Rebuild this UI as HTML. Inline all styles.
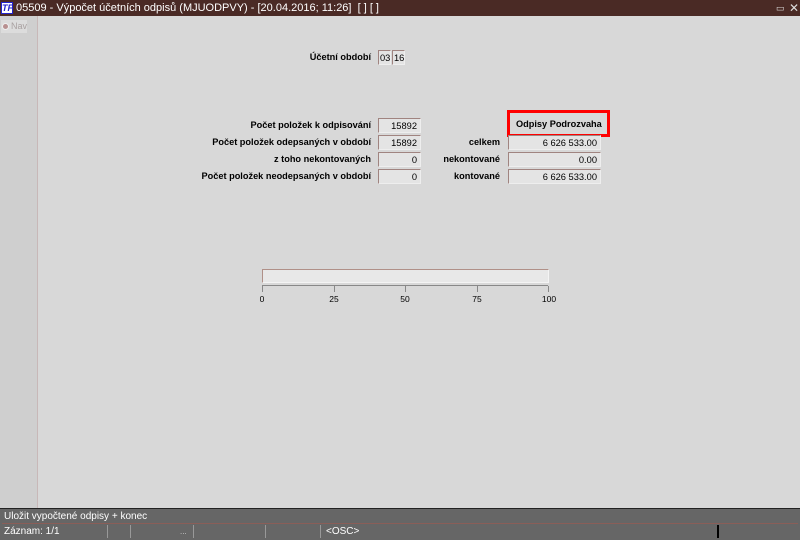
<!DOCTYPE html>
<html><head><meta charset="utf-8"><style>
*{margin:0;padding:0;box-sizing:border-box}
body{width:800px;height:540px;background:#d8d8d8;font-family:"Liberation Sans",sans-serif;font-size:11px;position:relative;overflow:hidden}
.a{position:absolute}
.lbl{position:absolute;font-weight:bold;font-size:9.2px;color:#000;text-align:right;white-space:nowrap}
.box{position:absolute;background:#e4e4e4;border:1px solid #a08480;border-right-color:#eee;border-bottom-color:#eee;font-size:9.3px;text-align:right;padding-right:3px;line-height:14px}
.tick{position:absolute;top:286px;width:1px;height:6px;background:#888}
.tl{position:absolute;top:294px;font-size:8.5px;width:30px;text-align:center}
</style></head><body>
<div class="a" style="left:0;top:0;width:800px;height:16px;background:#4a2a25;color:#fff;font-size:11px;line-height:16px;padding-left:16px">05509 - Výpočet účetních odpisů (MJUODPVY) - [20.04.2016; 11:26]&nbsp; [ ] [ ]</div>
<div class="a" style="left:1px;top:2px;width:12px;height:12px;background:#fff;border:1px solid #22c;color:#22c;font-size:9px;font-weight:bold;font-style:italic;line-height:10px;text-align:center">TF</div>
<div class="a" style="left:776px;top:3px;color:#ddd;font-size:9px">▭</div>
<div class="a" style="left:789px;top:0;color:#ddd;font-size:12px;line-height:16px">✕</div>
<div class="a" style="left:0;top:16px;width:38px;height:492px;background:#cfcfcf;border-right:1px solid #c8b8b8"></div>
<div class="a" style="left:1px;top:20px;width:26px;height:13px;background:#dcdcdc;color:#a8a0a0;font-size:9px;line-height:13px;padding-left:10px">Nav</div>
<div class="a" style="left:2px;top:23px;width:7px;height:7px;border-radius:50%;background:#b89090;border:1px solid #eee"></div>

<div class="lbl" style="right:429px;top:52px">Účetní období</div>
<div class="box" style="left:378px;top:50px;width:13px;height:15px;text-align:left;padding-left:1px">03</div>
<div class="box" style="left:392px;top:50px;width:13px;height:15px;text-align:left;padding-left:1px">16</div>

<div class="lbl" style="right:429px;top:120px">Počet položek k odpisování</div>
<div class="lbl" style="right:429px;top:137px">Počet položek odepsaných v období</div>
<div class="lbl" style="right:429px;top:154px">z toho nekontovaných</div>
<div class="lbl" style="right:429px;top:171px">Počet položek neodepsaných v období</div>
<div class="box" style="left:378px;top:118px;width:43px;height:15px">15892</div>
<div class="box" style="left:378px;top:135px;width:43px;height:15px">15892</div>
<div class="box" style="left:378px;top:152px;width:43px;height:15px">0</div>
<div class="box" style="left:378px;top:169px;width:43px;height:15px">0</div>

<div class="a" style="left:507px;top:110px;width:103px;height:27px;border:3px solid #f00"></div>
<div class="lbl" style="left:516px;top:119px">Odpisy Podrozvaha</div>
<div class="lbl" style="right:300px;top:137px">celkem</div>
<div class="lbl" style="right:300px;top:154px">nekontované</div>
<div class="lbl" style="right:300px;top:171px">kontované</div>
<div class="box" style="left:508px;top:135px;width:93px;height:15px">6 626 533.00</div>
<div class="box" style="left:508px;top:152px;width:93px;height:15px">0.00</div>
<div class="box" style="left:508px;top:169px;width:93px;height:15px">6 626 533.00</div>

<div class="a" style="left:262px;top:269px;width:287px;height:14px;background:#e8e8e8;border:1px solid #b09088;border-right-color:#f4f4f4;border-bottom-color:#f4f4f4"></div>
<div class="a" style="left:262px;top:285px;width:286px;height:1px;background:#888"></div>
<div class="tick" style="left:262px"></div><div class="tick" style="left:334px"></div><div class="tick" style="left:405px"></div><div class="tick" style="left:477px"></div><div class="tick" style="left:548px"></div>
<div class="tl" style="left:247px">0</div><div class="tl" style="left:319px">25</div><div class="tl" style="left:390px">50</div><div class="tl" style="left:462px">75</div><div class="tl" style="left:534px">100</div>

<div class="a" style="left:0;top:508px;width:800px;height:32px;background:#666;border-top:1px solid #222"></div>
<div class="a" style="left:2px;top:510px;width:796px;height:14px;border-bottom:1px solid #8a5e58;color:#fff;font-size:10px;line-height:14px;padding-left:2px">Uložit vypočtené odpisy + konec</div>
<div class="a" style="left:4px;top:525px;color:#fff;font-size:10px;line-height:14px">Záznam: 1/1</div>
<div class="a" style="left:107px;top:525px;width:1px;height:13px;background:#999"></div>
<div class="a" style="left:130px;top:525px;width:1px;height:13px;background:#999"></div>
<div class="a" style="left:180px;top:525px;color:#ccc;font-size:8px;line-height:14px">...</div>
<div class="a" style="left:193px;top:525px;width:1px;height:13px;background:#999"></div>
<div class="a" style="left:265px;top:525px;width:1px;height:13px;background:#999"></div>
<div class="a" style="left:320px;top:525px;width:1px;height:13px;background:#999"></div>
<div class="a" style="left:326px;top:525px;color:#fff;font-size:10px;line-height:14px">&lt;OSC&gt;</div>
<div class="a" style="left:717px;top:525px;width:2px;height:13px;background:#000"></div>
</body></html>
